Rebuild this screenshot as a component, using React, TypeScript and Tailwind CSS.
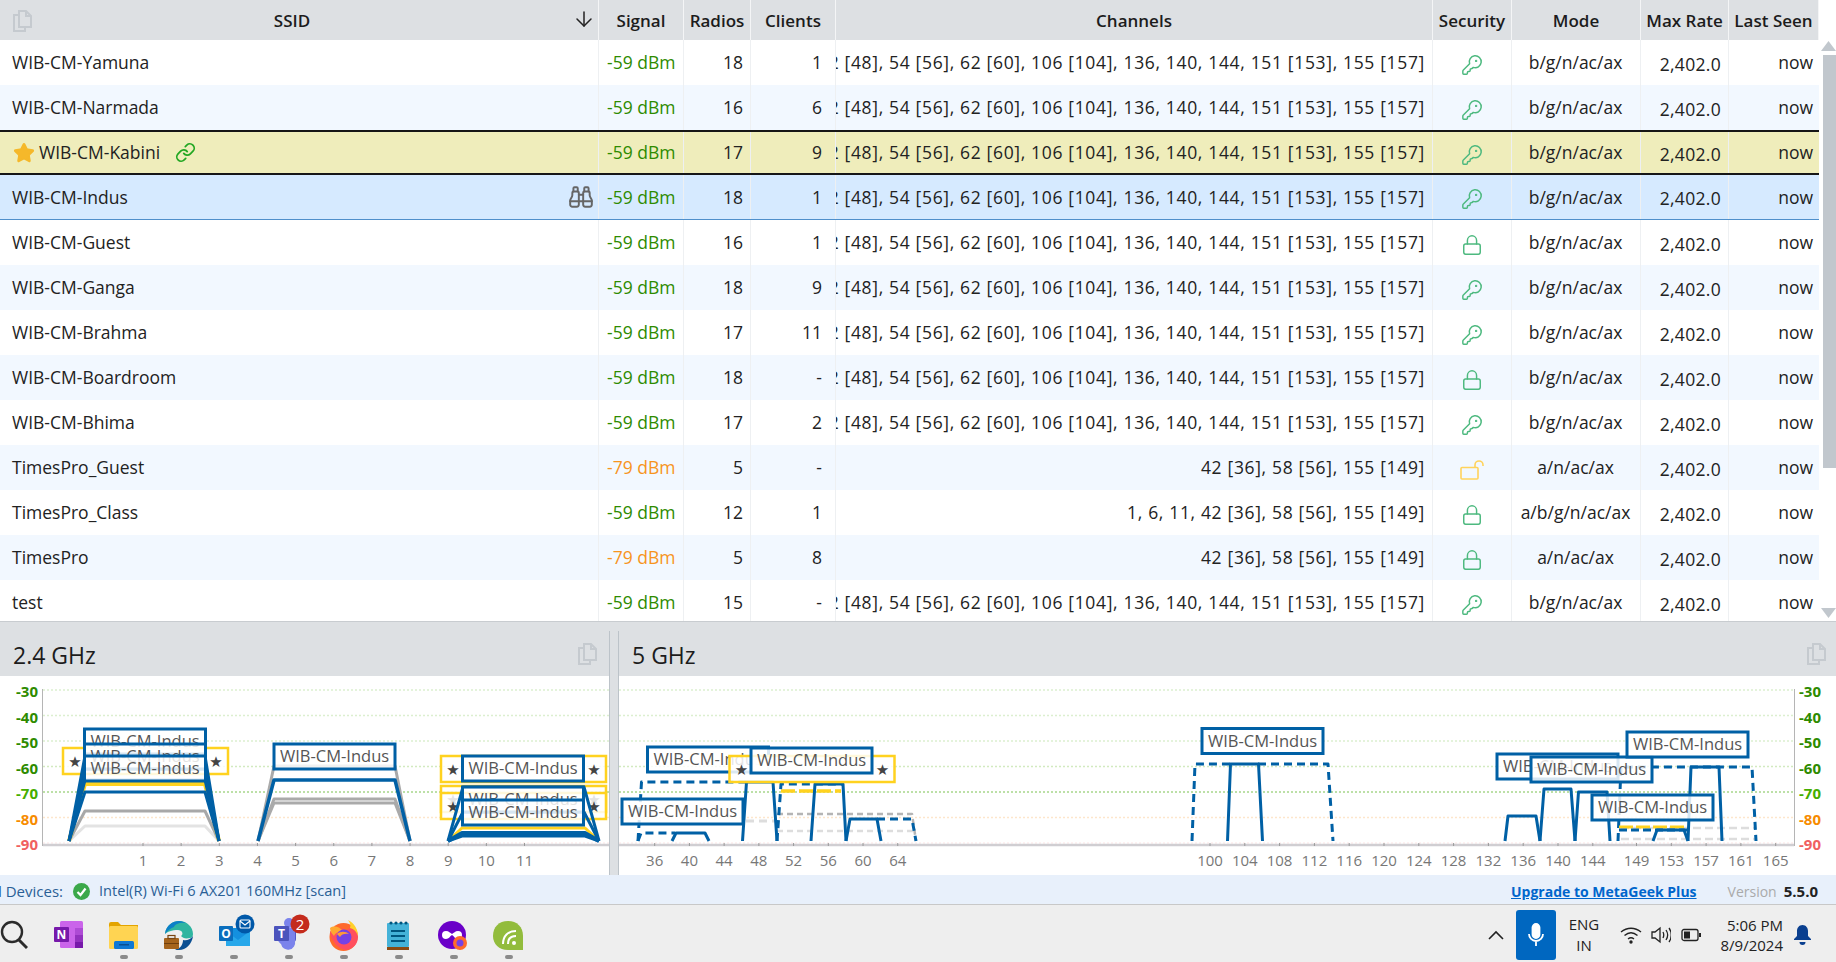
import { ArrowDown, Binoculars, KeyRound, Link, Lock, Star } from "lucide-react";

const LONG = "36 [42], 42 [48], 54 [56], 62 [60], 106 [104], 136, 140, 144, 151 [153], 155 [157]";

const rows = [
  { ssid: "WIB-CM-Yamuna", signal: -59, radios: 18, clients: "1", channels: LONG, sec: "key", mode: "b/g/n/ac/ax" },
  { ssid: "WIB-CM-Narmada", signal: -59, radios: 16, clients: "6", channels: LONG, sec: "key", mode: "b/g/n/ac/ax" },
  { ssid: "WIB-CM-Kabini", signal: -59, radios: 17, clients: "9", channels: LONG, sec: "key", mode: "b/g/n/ac/ax", kind: "connected" },
  { ssid: "WIB-CM-Indus", signal: -59, radios: 18, clients: "1", channels: LONG, sec: "key", mode: "b/g/n/ac/ax", kind: "selected" },
  { ssid: "WIB-CM-Guest", signal: -59, radios: 16, clients: "1", channels: LONG, sec: "lock", mode: "b/g/n/ac/ax" },
  { ssid: "WIB-CM-Ganga", signal: -59, radios: 18, clients: "9", channels: LONG, sec: "key", mode: "b/g/n/ac/ax" },
  { ssid: "WIB-CM-Brahma", signal: -59, radios: 17, clients: "11", channels: LONG, sec: "key", mode: "b/g/n/ac/ax" },
  { ssid: "WIB-CM-Boardroom", signal: -59, radios: 18, clients: "-", channels: LONG, sec: "lock", mode: "b/g/n/ac/ax" },
  { ssid: "WIB-CM-Bhima", signal: -59, radios: 17, clients: "2", channels: LONG, sec: "key", mode: "b/g/n/ac/ax" },
  { ssid: "TimesPro_Guest", signal: -79, radios: 5, clients: "-", channels: "42 [36], 58 [56], 155 [149]", sec: "open", mode: "a/n/ac/ax" },
  { ssid: "TimesPro_Class", signal: -59, radios: 12, clients: "1", channels: "1, 6, 11, 42 [36], 58 [56], 155 [149]", sec: "lock", mode: "a/b/g/n/ac/ax" },
  { ssid: "TimesPro", signal: -79, radios: 5, clients: "8", channels: "42 [36], 58 [56], 155 [149]", sec: "lock", mode: "a/n/ac/ax" },
  { ssid: "test", signal: -59, radios: 15, clients: "-", channels: LONG, sec: "key", mode: "b/g/n/ac/ax" },
];

const BLUE = "#0060a5";
const GOLD = "#ffd21f";
const FONT = "'Open Sans', sans-serif";

function CopyIcon() {
  return (
    <svg width="20" height="24" viewBox="0 0 20 24" fill="none" stroke="#c5cacf" strokeWidth="2">
      <path d="M7 2h7l5 5v11H7z" />
      <path d="M14 2v5h5" />
      <path d="M7 6H2v16h11v-4" />
    </svg>
  );
}

function HeaderCell({ w, label }: { w: string; label: string }) {
  return (
    <div className={`${w} flex h-full items-center justify-center border-r border-[#f4f5f6] pt-[2px] font-semibold`}>
      {label}
    </div>
  );
}

function SecurityIcon({ type }: { type: string }) {
  if (type === "key") return <KeyRound className="mt-[4px] text-[#4db97f]" size={22} strokeWidth={1.6} />;
  if (type === "lock") return <Lock className="mt-[4px] text-[#4db97f]" size={22} strokeWidth={1.6} />;
  return (
    <svg className="mt-[4px]" width="24" height="20" viewBox="0 0 24 20" fill="none" stroke="#ffd35c" strokeWidth="1.6">
      <rect x="1" y="7.500" width="17" height="11.500" rx="1" />
      <path d="M15 7.500V5a4 4 0 0 1 8 0v1" />
    </svg>
  );
}

function Row({ row, index }: { row: (typeof rows)[number]; index: number }) {
  let bg = index % 2 === 0 ? "bg-white" : "bg-[#f2f8ff]";
  if (row.kind === "connected") bg = "bg-[#efedbb] border-y-2 border-[#161616]";
  if (row.kind === "selected") bg = "bg-[#d6eaff] border-b border-[#4f8fcb]";
  const cell = "flex h-full items-center border-r border-[#eef0f2]";
  return (
    <div className={`flex h-[45px] shrink-0 items-center ${bg}`}>
      <div className={`${cell} w-[599px] justify-between pl-[12px] pr-[4px]`}>
        {row.kind === "connected" ? (
          <span className="ml-[1px] flex items-center">
            <Star className="mr-[4px] fill-[#f5b82a] text-[#f5b82a]" size={22} />
            {row.ssid}
            <Link className="ml-[15px] text-[#22a722]" size={21} strokeWidth={2} />
          </span>
        ) : (
          <span>{row.ssid}</span>
        )}
        {row.kind === "selected" && <Binoculars className="text-[#666]" size={26} strokeWidth={1.8} />}
      </div>
      <div className={`${cell} w-[85px] pl-[8px] ${row.signal === -59 ? "text-[#2e8b00]" : "text-[#f7941d]"}`}>{row.signal} dBm</div>
      <div className={`${cell} w-[67px] justify-end pr-[7px]`}>{row.radios}</div>
      <div className={`${cell} w-[85px] justify-end pr-[13px]`}>{row.clients}</div>
      <div className={`${cell} w-[597px] justify-end overflow-hidden whitespace-nowrap pr-[7px] tracking-[0.66px]`}>{row.channels}</div>
      <div className={`${cell} w-[79px] justify-center`}><SecurityIcon type={row.sec} /></div>
      <div className={`${cell} w-[129px] justify-center pr-[1px]`}>{row.mode}</div>
      <div className={`${cell} w-[88px] justify-end pr-[7px] pt-[3px] tracking-[0.3px]`}>2,402.0</div>
      <div className="flex h-full w-[90px] items-center justify-end pr-[6px]">now</div>
    </div>
  );
}

function Trace({ pts, color = BLUE, w = 3, dash, op = 1 }: { pts: string; color?: string; w?: number; dash?: string; op?: number }) {
  return <polyline points={pts} fill="none" stroke={color} strokeWidth={w} strokeDasharray={dash} opacity={op} strokeLinejoin="round" />;
}

function Label({ x, y, w = 121, text = "WIB-CM-Indus" }: { x: number; y: number; w?: number; text?: string }) {
  return (
    <g>
      <rect x={x} y={y} width={w} height={25} fill="#fff" fillOpacity={0.84} stroke={BLUE} strokeWidth={3} />
      <text x={x + 6} y={y + 18} fontFamily={FONT} fontSize="16.5" fill="#555">{text}</text>
    </g>
  );
}

function GoldLabel({ x, y, w = 165 }: { x: number; y: number; w?: number }) {
  return (
    <g>
      <rect x={x} y={y} width={w} height={26} fill="#fff" fillOpacity={0.85} stroke={GOLD} strokeWidth={2.5} />
      <text x={x + 12} y={y + 19} textAnchor="middle" fontFamily="'DejaVu Sans', sans-serif" fontSize="15" fill="#444">★</text>
      <text x={x + w - 12} y={y + 19} textAnchor="middle" fontFamily="'DejaVu Sans', sans-serif" fontSize="15" fill="#444">★</text>
    </g>
  );
}

const GRID = [
  { y: 689, v: "-30", c: "#2e8b00", g: "#dcefcf" },
  { y: 714.5, v: "-40", c: "#2e8b00", g: "#dcefcf" },
  { y: 740, v: "-50", c: "#2e8b00", g: "#dcefcf" },
  { y: 765.5, v: "-60", c: "#2e8b00", g: "#d2eac0" },
  { y: 791, v: "-70", c: "#45ad00", g: "#a6d68a" },
  { y: 816.5, v: "-80", c: "#f78b00", g: "#fde6cc" },
  { y: 842, v: "-90", c: "#f06060", g: "#feeeee" },
];

function Grid({ x1, x2, labelX, anchor }: { x1: number; x2: number; labelX: number; anchor: "start" | "end" }) {
  return (
    <g>
      {GRID.map((g) => (
        <g key={g.v}>
          <line x1={x1} x2={x2} y1={g.y} y2={g.y} stroke={g.g} strokeWidth="1.5" strokeDasharray="2 2" />
          <text x={labelX} y={g.y + 7} textAnchor={anchor} fontFamily={FONT} fontWeight="700" fontSize="15" fill={g.c}>{g.v}</text>
        </g>
      ))}
    </g>
  );
}

function Ticks({ items }: { items: [string, number][] }) {
  return (
    <g>
      {items.map(([t, x]) => (
        <g key={t}>
          <line x1={x} x2={x} y1={842} y2={845} stroke="#999" />
          <text x={x} y={865} textAnchor="middle" fontFamily={FONT} fontSize="15" fill="#777">{t}</text>
        </g>
      ))}
    </g>
  );
}

function Chart24() {
  const ticks: [string, number][] = ["1", "2", "3", "4", "5", "6", "7", "8", "9", "10", "11"].map((t, i) => [t, 143 + 38.15 * i]);
  const trap = (a: number, b: number, c: number, d: number, top: number) => `${a},840 ${b},${top} ${c},${top} ${d},840`;
  return (
    <svg className="block" width="609" height="199" viewBox="0 675 609 199">
      <Grid x1={43} x2={609} labelX={38} anchor="end" />
      <line x1={42.5} x2={42.5} y1={688} y2={845} stroke="#b5b5b5" />
      <line x1={43} x2={609} y1={844} y2={844} stroke="#d0ced2" strokeWidth="2.5" />
      <Ticks items={ticks} />

      <Trace pts={trap(69, 85, 205, 219, 825)} color="#e3e3e3" />
      <Trace pts={trap(69, 85, 205, 219, 810)} color="#a8a8a8" />
      <GoldLabel x={63} y={747} />
      <Trace pts={trap(69, 85, 205, 219, 783)} color={GOLD} w={4} />
      <Trace pts={trap(69, 85, 205, 219, 791)} />
      <Trace pts={trap(69, 85, 205, 219, 779)} />
      <Trace pts={trap(69, 85, 205, 219, 768)} />
      <Trace pts={trap(69, 85, 205, 219, 755)} />
      <Label x={84.5} y={728} />
      <Label x={84.5} y={743} />
      <Label x={84.5} y={755} />

      <Trace pts={trap(258, 274, 395, 410, 802)} color="#aaa" />
      <Trace pts={trap(258, 274, 395, 410, 798)} color="#aaa" />
      <Trace pts={trap(258, 274, 395, 410, 765)} color="#aaa" />
      <Trace pts={trap(258, 274, 395, 410, 779)} w={3.5} />
      <Label x={274} y={743} />

      <GoldLabel x={441} y={755} />
      <GoldLabel x={441} y={785} />
      <GoldLabel x={441} y={792} />
      <Trace pts="448,840 462,827 585,827 599,840" color={GOLD} w={3} />
      <Trace pts="448,840 463,811 584,811 599,840" />
      <Trace pts="448,840 463,786 584,786 599,840" />
      <Trace pts="448,840 462,832 585,832 599,840" w={4} />
      <Trace pts="448,840 462,835 585,835 599,840" w={3} />
      <Label x={462.5} y={755} />
      <Label x={462.5} y={786} />
      <Label x={462.5} y={799} />
    </svg>
  );
}

function Chart5() {
  const names = [36, 40, 44, 48, 52, 56, 60, 64];
  const mid = [100, 104, 108, 112, 116, 120, 124, 128, 132, 136, 140, 144];
  const high = [149, 153, 157, 161, 165];
  const ticks: [string, number][] = [
    ...names.map((n, i): [string, number] => [String(n), 654.7 + 34.72 * i]),
    ...mid.map((n, i): [string, number] => [String(n), 1210 + 34.8 * i]),
    ...high.map((n, i): [string, number] => [String(n), 1636.5 + 34.8 * i]),
  ];
  const dash = "8 5";
  return (
    <svg className="block" width="1217" height="199" viewBox="619 675 1217 199">
      <Grid x1={619} x2={1794} labelX={1799} anchor="start" />
      <line x1={1794.5} x2={1794.5} y1={688} y2={845} stroke="#b5b5b5" />
      <line x1={619} x2={1794} y1={844} y2={844} stroke="#d0ced2" strokeWidth="2.5" />
      <Ticks items={ticks} />

      <Trace pts="746,820 776,820" color="#ddd" dash={dash} />
      <Trace pts="777,813 912,813 916,840" color="#b5b5b5" dash="6 4" w={2.5} />
      <Trace pts="777,830 916,830" color="#ddd" dash="6 4" w={2.5} />
      <Trace pts="781,790 841,790" color={GOLD} w={3.5} dash="14 4" />
      <Trace pts="638,840 641.5,781 746,781" dash={dash} />
      <Trace pts="742.5,840 746.5,781 773,781 777,840" />
      <Trace pts="777,840 781,783 842,783" dash={dash} />
      <Trace pts="811,840 815,783 843,783 846,840" />
      <Trace pts="846,840 850,818 877,818 881,840" />
      <Trace pts="877,818 912,818 916,840" dash={dash} />
      <Trace pts="638,840 641,832 675,832" dash={dash} />
      <Trace pts="672,840 676,832 705,832 709,840" />
      <Label x={647.5} y={746} />
      <GoldLabel x={729.5} y={755} />
      <Label x={751} y={747} />
      <Label x={622} y={798} />

      <Trace pts="1192,840 1195,763 1230,763" dash={dash} />
      <Trace pts="1227.5,840 1230.5,763 1258.5,763 1262.5,840" />
      <Trace pts="1258,763 1328,763 1333,840" dash={dash} />
      <Label x={1202} y={727.5} />

      <Trace pts="1621,827 1755,827" color="#ddd" dash="8 4" w={2.5} />
      <Trace pts="1621,838 1755,838" color="#ddd" dash="8 4" w={2.5} />
      <Trace pts="1505,840 1508,815 1536,815 1540,840" />
      <Trace pts="1540,840 1544,788 1571,788 1575,840" />
      <Trace pts="1575,840 1578.5,791 1607,791 1610,840" />
      <Trace pts="1618,840 1621,766 1752,766 1756,840" dash={dash} />
      <Trace pts="1688,840 1691,766 1719,766 1722,840" />
      <Trace pts="1619,826 1686,826" color={GOLD} w={3} dash="14 3" />
      <Trace pts="1619,829 1688,829" dash="8 4" />
      <Trace pts="1653,840 1657,829 1684,829 1688,840" />
      <Label x={1497} y={753} />
      <Label x={1531} y={756} />
      <Label x={1627} y={731} />
      <Label x={1592} y={794} />
    </svg>
  );
}

function Taskbar() {
  return (
    <div className="relative flex h-[57px] items-center bg-[#eeeeee]">
      <div className="flex h-full w-[28px] items-center pt-[2px]">
        <svg width="28" height="32" viewBox="0 0 28 32" fill="none" stroke="#2b2b2b" strokeWidth="2.4">
          <circle cx="12" cy="13" r="10" />
          <path d="M19 21l8 8" strokeWidth="3" />
        </svg>
      </div>
      <div className="ml-[25px] mt-[3px] flex">
        <TaskIcon>
          <rect x="7" y="1" width="23" height="27" rx="1.5" fill="#ca64ea" />
          <rect x="22" y="8" width="8" height="7" fill="#ae4bd5" />
          <rect x="22" y="15" width="8" height="7" fill="#9332bf" />
          <rect x="22" y="22" width="8" height="6" fill="#7719aa" />
          <rect x="1" y="7" width="15" height="15" rx="1" fill="#7719aa" />
          <text x="8.5" y="19" textAnchor="middle" fontFamily={FONT} fontWeight="700" fontSize="12" fill="#fff">N</text>
        </TaskIcon>
        <TaskIcon>
          <path d="M1 4a2 2 0 0 1 2-2h7l3 3h17v4H1z" fill="#e3a400" />
          <rect x="1" y="6" width="29" height="23" rx="1.5" fill="#ffd452" />
          <rect x="6" y="21" width="20" height="8" rx="1.5" fill="#0f78d4" />
          <rect x="11" y="24" width="10" height="1.5" fill="#0a4f92" />
        </TaskIcon>
        <TaskIcon>
          <path d="M2 14C3 5 10 1 16 1c8 0 14 6 14 13 0 2-1 4-3 4-5 1-7 0-9-2 3-2 1-6-3-6C9 10 4 12 2 14z" fill="#2fb5a0" />
          <path d="M2 14c1-9 8-13 14-13 3 0 5 1 7 2-6-1-11 1-12 4-3 1-7 4-9 7z" fill="#0c7fc8" />
          <path d="M30 16c-1 8-7 14-14 14-2 0-3 0-4-1 6 0 8-5 8-9 3 1 7 0 10-4z" fill="#0a4f92" />
          <rect x="1" y="18" width="15" height="11" rx="1" fill="#a5641d" />
          <rect x="5" y="15.5" width="7" height="3" fill="none" stroke="#7a4510" strokeWidth="1.2" />
          <rect x="1" y="23" width="15" height="1" fill="#6f3f0e" />
        </TaskIcon>
        <div className="relative h-[34px] w-[55px]">
          <svg className="absolute left-0 top-0 overflow-visible" width="55" height="34" viewBox="0 0 55 34">
            <g transform="translate(-9 -3)">
              <path d="M17 13h24v18H17z" fill="#1490df" />
              <path d="M17 16l12 9 12-9v15H17z" fill="#28a8ea" />
              <rect x="10" y="11" width="14" height="15" rx="1" fill="#0a6ebd" />
              <text x="17" y="23" textAnchor="middle" fontFamily={FONT} fontWeight="700" fontSize="12" fill="#fff">O</text>
              <circle cx="36" cy="9" r="9.5" fill="#0058a8" />
              <rect x="31" y="5" width="10" height="8" rx="1" fill="none" stroke="#fff" strokeWidth="1.1" />
              <path d="M31 6l5 4 5-4" fill="none" stroke="#fff" strokeWidth="1.1" />
            </g>
          </svg>
        </div>
        <div className="relative h-[34px] w-[55px]">
          <svg className="absolute left-0 top-0 overflow-visible" width="55" height="34" viewBox="0 0 55 34">
            <g transform="translate(-9 -3)">
              <rect x="19" y="13" width="13" height="14" rx="3" fill="#5059c9" />
              <circle cx="25" cy="8" r="5" fill="#7b83eb" />
              <path d="M11 13h20v13a7 7 0 0 1-14 3c-3-2-6-8-6-16z" fill="#7b83eb" />
              <rect x="10" y="11" width="15" height="15" rx="1" fill="#4b53bc" />
              <text x="17.5" y="23" textAnchor="middle" fontFamily={FONT} fontWeight="700" fontSize="12" fill="#fff">T</text>
              <circle cx="36" cy="9" r="9.5" fill="#c42b1c" />
              <text x="36" y="14.5" textAnchor="middle" fontFamily={FONT} fontSize="15" fill="#fff">2</text>
            </g>
          </svg>
        </div>
        <TaskIcon>
          <circle cx="15.5" cy="17" r="14" fill="#ff6a2b" />
          <path d="M2 12c2 10 8 17 16 18 7-1 12-6 12-13 0-6-3-11-8-15 2 5 0 7-4 8C11 7 5 7 2 12z" fill="#ff4f5e" />
          <path d="M20 0c6 3 10 9 10 16-2-5-4-7-8-8 1-3 0-5-2-8z" fill="#ffd02a" />
          <path d="M2 8c4-3 10-1 13 3-4 0-8 2-9 5-2-2-4-5-4-8z" fill="#ffa930" />
          <circle cx="16" cy="17" r="7.5" fill="#7542e5" />
          <path d="M9 14c3-3 9-3 12 0-3-1-8 0-9 3-1-1-2-2-3-3z" fill="#ff9a3a" />
        </TaskIcon>
        <TaskIcon>
          <rect x="4" y="3" width="22" height="24" rx="1" fill="#44b2d8" />
          <rect x="4" y="27" width="22" height="3" fill="#8c4a12" />
          <circle cx="8" cy="3" r="1.6" fill="#00567f" />
          <circle cx="13" cy="3" r="1.6" fill="#00567f" />
          <circle cx="18" cy="3" r="1.6" fill="#00567f" />
          <circle cx="23" cy="3" r="1.6" fill="#00567f" />
          <rect x="8" y="10" width="14" height="2" fill="#00567f" />
          <rect x="8" y="15" width="14" height="2" fill="#00567f" />
          <rect x="8" y="20" width="14" height="2" fill="#00567f" />
        </TaskIcon>
        <TaskIcon>
          <circle cx="14" cy="15" r="14" fill="#6a00c8" />
          <path d="M8 11a4 4 0 0 0 0 8c3 0 4-3 6-4 2 1 3 4 6 4a4 4 0 0 0 0-8c-3 0-4 2-6 3-2-1-3-3-6-3z" fill="#fff" />
          <circle cx="22" cy="23" r="7" fill="#ff6a2b" />
          <circle cx="22" cy="23" r="3.5" fill="#7542e5" />
        </TaskIcon>
        <TaskIcon>
          <path d="M0 16C0 7 6 1 15 1s15 6 15 15v14H15C6 30 0 24 0 16z" fill="#92bc3c" />
          <path d="M10 24c0-8 5-13 13-13M15 24c0-5 3-8 8-8" fill="none" stroke="#fff" strokeWidth="2" />
          <circle cx="21" cy="23" r="2" fill="#fff" />
        </TaskIcon>
      </div>
      <div className="absolute bottom-[3px] left-[120px] flex gap-[47px]">
        {[0, 1, 2, 3, 4, 5, 6, 7].map((i) => (
          <div key={i} className="h-[4px] w-[8px] rounded-full bg-[#8a8a8a]" />
        ))}
      </div>
      <div className="ml-auto flex h-full items-center pt-[2px] text-[#222]">
        <svg className="mr-[12px]" width="16" height="10" viewBox="0 0 16 10" fill="none" stroke="#222" strokeWidth="1.6">
          <path d="M1 9l7-7 7 7" />
        </svg>
        <div className="flex h-[50px] w-[40px] items-center justify-center rounded-[3px] bg-[#0067c0]">
          <svg width="20" height="26" viewBox="0 0 20 26" fill="none" stroke="#fff" strokeWidth="1.8">
            <rect x="6.5" y="2" width="7" height="14" rx="3.5" fill="#fff" />
            <path d="M3 12a7 7 0 0 0 14 0M10 19v5" />
          </svg>
        </div>
        <div className="w-[56px] text-center text-[15px] leading-[21px]">
          <div>ENG</div>
          <div>IN</div>
        </div>
        <svg className="ml-[8px]" width="22" height="18" viewBox="0 0 22 18" fill="none" stroke="#222" strokeWidth="1.4">
          <path d="M1 6c6-5 14-5 20 0M4.5 9.5c4-3.5 9-3.5 13 0M8 13c2-1.6 4-1.6 6 0" />
          <circle cx="11" cy="16" r="1" fill="#222" />
        </svg>
        <svg className="ml-[9px]" width="20" height="18" viewBox="0 0 20 18" fill="none" stroke="#222" strokeWidth="1.3">
          <path d="M1 6h3l5-4v14l-5-4H1z" />
          <path d="M12 6c1 2 1 4 0 6M15 4c2 3 2 7 0 10M18 2c3 4 3 10 0 14" />
        </svg>
        <svg className="ml-[10px]" width="20" height="14" viewBox="0 0 20 14" fill="none" stroke="#222" strokeWidth="1.3">
          <rect x="1" y="1.5" width="16" height="11" rx="2" />
          <rect x="3" y="3.5" width="6" height="7" fill="#222" stroke="none" />
          <path d="M19 5v4" strokeWidth="2" />
        </svg>
        <div className="ml-[12px] w-[70px] whitespace-nowrap text-right text-[15px] leading-[20px]">
          <div>5:06 PM</div>
          <div>8/9/2024</div>
        </div>
        <svg className="ml-[11px] mr-[25px]" width="17" height="20" viewBox="0 0 17 20" fill="#0a3f8f">
          <path d="M8.5 0C5 0 3 3 3 6v5l-3 3v1h17v-1l-3-3V6c0-3-2-6-5.500-6z" />
          <path d="M5.500 17h6a3 3 0 0 1-6 0z" />
        </svg>
      </div>
    </div>
  );
}

function TaskIcon({ children }: { children: React.ReactNode }) {
  return (
    <div className="flex h-[34px] w-[55px] items-center">
      <svg width="31" height="31" viewBox="0 0 31 31">{children}</svg>
    </div>
  );
}

export default function App() {
  return (
    <div className="flex h-[962px] w-[1836px] flex-col overflow-hidden bg-white text-[17.5px] text-[#222]" style={{ fontFamily: FONT }}>
      <div className="flex h-[622px] shrink-0 overflow-hidden border-b border-[#c8ccd0]">
        <div className="flex w-[1819px] flex-col">
          <div className="flex h-[40px] shrink-0 items-center bg-[#dde0e3] text-[17px] text-[#1c1c1c]">
            <div className="relative flex h-full w-[599px] items-center justify-center border-r border-[#f4f5f6] pr-[14px] pt-[2px] font-semibold">
              <div className="absolute left-[12px] top-[9px]"><CopyIcon /></div>
              SSID
              <ArrowDown className="absolute right-[2px] top-[7px] text-[#222]" size={24} strokeWidth={1.5} />
            </div>
            <HeaderCell w="w-[85px]" label="Signal" />
            <HeaderCell w="w-[67px]" label="Radios" />
            <HeaderCell w="w-[85px]" label="Clients" />
            <HeaderCell w="w-[597px]" label="Channels" />
            <HeaderCell w="w-[79px]" label="Security" />
            <HeaderCell w="w-[129px]" label="Mode" />
            <HeaderCell w="w-[88px]" label="Max Rate" />
            <HeaderCell w="w-[90px]" label="Last Seen" />
          </div>
          {rows.map((r, i) => (
            <Row key={r.ssid} row={r} index={i} />
          ))}
        </div>
        <div className="flex w-[17px] flex-col pl-[1px]">
          <div className="flex h-[55px] items-end justify-center pb-[4px]">
            <svg width="15" height="10" viewBox="0 0 15 10"><path d="M7.500 0l7.500 10H0z" fill="#c1c7cd" /></svg>
          </div>
          <div className="ml-[3px] h-[413px] bg-[#c1c7cd]" />
          <div className="flex flex-1 items-start justify-center pt-[140px]">
            <svg width="15" height="10" viewBox="0 0 15 10"><path d="M7.500 10L15 0H0z" fill="#c1c7cd" /></svg>
          </div>
        </div>
      </div>

      <div className="h-[9px] shrink-0 bg-[#dde0e3]" />
      <div className="flex h-[244px] shrink-0">
        <div className="w-[609px] shrink-0">
          <div className="flex h-[45px] items-center justify-between bg-[#dde0e3] pl-[13px] pr-[12px] text-[23px] text-[#1c1c1c]">
            <span className="pt-[3px]">2.4 GHz</span>
            <CopyIcon />
          </div>
          <Chart24 />
        </div>
        <div className="w-[10px] shrink-0 border-x border-[#bcc3c9] bg-[#dde0e3]" />
        <div className="flex-1">
          <div className="flex h-[45px] items-center justify-between bg-[#dde0e3] pl-[13px] pr-[10px] text-[23px] text-[#1c1c1c]">
            <span className="pt-[3px]">5 GHz</span>
            <CopyIcon />
          </div>
          <Chart5 />
        </div>
      </div>

      <div className="flex h-[30px] shrink-0 items-center border-b border-[#c8c8c8] bg-[#e8f0fb] pt-[3px] text-[15px] text-[#2a5f96]">
        <div className="flex w-[63px] justify-end overflow-hidden whitespace-nowrap">Connected Devices:</div>
        <svg className="ml-[10px]" width="17" height="17" viewBox="0 0 17 17">
          <circle cx="8.500" cy="8.500" r="8.500" fill="#3ba84a" />
          <path d="M4.500 9l3 3 5-6.500" fill="none" stroke="#fff" strokeWidth="2.200" />
        </svg>
        <span className="ml-[9px] text-[14.6px]">Intel(R) Wi-Fi 6 AX201 160MHz [scan]</span>
        <a className="ml-auto text-[14px] font-bold text-[#0066cc] underline" href="#">Upgrade to MetaGeek Plus</a>
        <span className="ml-[31px] text-[14px] text-[#aaa]">Version</span>
        <span className="ml-[7px] mr-[18px] font-bold text-[#222]">5.5.0</span>
      </div>

      <Taskbar />
    </div>
  );
}
